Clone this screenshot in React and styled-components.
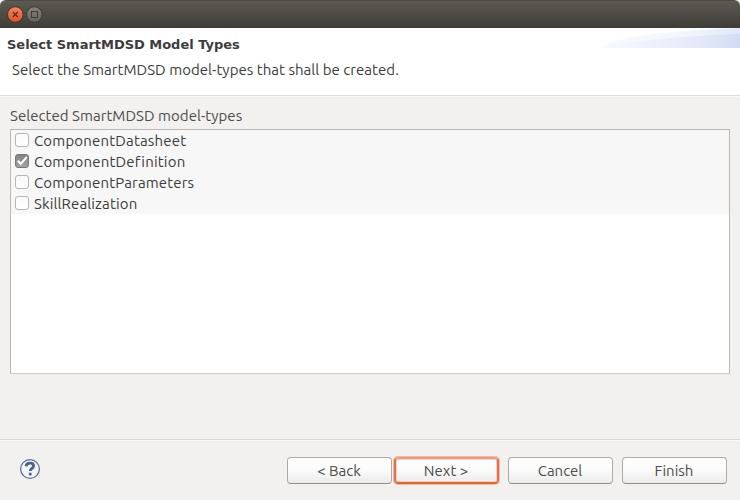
import React from "react";
import styled, { createGlobalStyle, css } from "styled-components";

const Global = createGlobalStyle`
  *, *::before, *::after { box-sizing: border-box; }
  html, body { margin: 0; background: #fff; }
  body { font: 15px/21px Ubuntu, "Noto Sans", sans-serif; color: #3c3c3c; overflow: hidden; }
`;

const Dialog = styled.main`
  width: 740px;
  height: 500px;
  display: flex;
  flex-direction: column;
  background: #f2f1f0;
`;

const TitleBar = styled.header`
  height: 28px;
  flex: none;
  display: flex;
  gap: 1px;
  padding: 5px 6px;
  border-radius: 6px 6px 0 0;
  border-top: 1px solid #4c4a44;
  background: linear-gradient(#5f5d53 0, #5a574e 2px, #3e3d38 100%);
`;

const WindowButton = styled.button`
  width: 18px;
  height: 18px;
  padding: 0;
  border: 0;
  background: none;
  line-height: 0;
`;

const Banner = styled.section`
  height: 68px;
  flex: none;
  display: flex;
  justify-content: space-between;
  background: #fff;
  border-bottom: 1px solid #dcdcdc;
`;

const BannerText = styled.div`
  padding: 6px 0 0 7px;
`;

const Heading = styled.h1`
  margin: 0;
  font: bold 13px/21px "DejaVu Sans", sans-serif;
  letter-spacing: ${(p) => p.$track}px;
  white-space: nowrap;
`;

const Text = styled.span`
  letter-spacing: ${(p) => p.$track || 0}px;
  white-space: nowrap;
`;

const Description = styled.p`
  margin: 4px 0 0 5px;
`;

const Content = styled.section`
  flex: 1;
  padding: 8px 10px 0;
  border-top: 1px solid #fafafa;
`;

const ListLabel = styled.div`
  height: 24px;
  color: #4c4c4c;
`;

const List = styled.ul`
  height: 245px;
  margin: 0;
  padding: 0;
  list-style: none;
  background: #fff;
  border: 1px solid #b9b6b3;
  border-bottom-color: #cfcdcb;
`;

const Row = styled.li`
  height: 21px;
  display: flex;
  align-items: center;
  gap: 5px;
  padding-left: 4px;
  background: #f7f7f7;
`;

const Box = styled.span`
  width: 14px;
  height: 14px;
  flex: none;
  margin-top: -2px;
  display: flex;
  border-radius: 3px;
  border: 1px solid ${(p) => (p.$checked ? "#777" : "#b7b6b5")};
  background: ${(p) => (p.$checked ? "linear-gradient(#858585, #a2a2a2)" : "linear-gradient(#fafafa, #fff)")};
`;

const Footer = styled.footer`
  height: 61px;
  flex: none;
  display: flex;
  align-items: flex-start;
  padding: 16px 13px 0 19px;
  border-top: 1px solid #dad9d8;
  box-shadow: inset 0 1px #fbfbfb;
`;

const Help = styled.button`
  width: 22px;
  height: 22px;
  margin: 2px auto 0 0;
  padding: 0;
  border: 0;
  background: none;
  line-height: 0;
`;

const Actions = styled.div`
  display: flex;
  gap: 9px;
  padding-top: 1px;
`;

const Pair = styled.div`
  display: flex;
  gap: 2px;
`;

const Button = styled.button`
  width: 105px;
  height: 27px;
  padding: 0 1px 0 0;
  font: inherit;
  line-height: 25px;
  color: #4c4c4c;
  border: 1px solid #adabaa;
  border-bottom-color: #8f8e8d;
  border-radius: 4px;
  background: linear-gradient(#fff, #fafafa 50%, #ececeb);
  ${(p) =>
    p.$primary &&
    css`
      line-height: 23px;
      border: 2px solid #dc744a;
      border-top-color: #eb9d80;
      border-bottom-color: #d36b40;
      box-shadow: 0 0 0 1px #efb9a5, inset 0 0 0 1px #f1d0c3;
    `}
`;

const items = [
  { name: "ComponentDatasheet", track: 0.17 },
  { name: "ComponentDefinition", track: 0.2, checked: true },
  { name: "ComponentParameters", track: 0.16 },
  { name: "SkillRealization", track: 0.13 },
];

function CloseIcon() {
  return (
    <svg width="18" height="18" viewBox="0 0 18 18">
      <defs>
        <linearGradient id="close" x2="0" y2="1">
          <stop stopColor="#f58463" />
          <stop offset="1" stopColor="#e35023" />
        </linearGradient>
      </defs>
      <circle cx="9.3" cy="8.5" r="7.8" fill="url(#close)" stroke="#3b3833" strokeWidth="1" />
      <path d="M6.8 6 11.8 11M11.8 6 6.8 11" stroke="#5a3427" strokeWidth="1.4" />
    </svg>
  );
}

function MaximizeIcon() {
  return (
    <svg width="18" height="18" viewBox="0 0 18 18">
      <defs>
        <linearGradient id="max" x2="0" y2="1">
          <stop stopColor="#85837c" />
          <stop offset="1" stopColor="#64625c" />
        </linearGradient>
      </defs>
      <circle cx="9.4" cy="8.5" r="7.8" fill="url(#max)" stroke="#3b3833" strokeWidth="1" />
      <rect x="6.5" y="5.5" width="6" height="6" fill="none" stroke="#3d3b37" />
    </svg>
  );
}

function Swoosh() {
  return (
    <svg width="141" height="20" viewBox="0 0 141 20">
      <defs>
        <linearGradient id="upper">
          <stop stopColor="#f8fafd" />
          <stop offset=".6" stopColor="#f3f6fc" />
          <stop offset="1" stopColor="#dfe8f9" />
        </linearGradient>
        <linearGradient id="lower">
          <stop stopColor="#f8faff" />
          <stop offset=".55" stopColor="#e9edf9" />
          <stop offset=".85" stopColor="#dce5f6" />
          <stop offset="1" stopColor="#cfdaf5" />
        </linearGradient>
      </defs>
      <path d="M1 20C12 9 72 2 141 0V20Z" fill="url(#upper)" />
      <path d="M1 20C35 12 85 8 141 6V20Z" fill="url(#lower)" />
    </svg>
  );
}

function HelpIcon() {
  return (
    <svg width="22" height="22" viewBox="0 0 22 22">
      <circle cx="11" cy="11" r="9.4" fill="#f3f4f6" stroke="#5b7093" strokeWidth="1.3" />
      <path d="M7 8.300C7.300 6 8.800 5.200 11 5.200c2.300 0 3.600 1 3.600 2.700 0 2.500-3.300 2.500-3.300 5" fill="none" stroke="#4a608a" strokeWidth="2.800" />
      <circle cx="11.200" cy="16" r="1.600" fill="#4a608a" />
    </svg>
  );
}

function Tick() {
  return (
    <svg width="12" height="12" viewBox="0 0 12 12">
      <path d="m1.800 5.800 3 3L10.800 2" fill="none" stroke="#fff" strokeWidth="2" />
    </svg>
  );
}

export default function App() {
  return (
    <>
      <Global />
      <Dialog>
        <TitleBar>
          <WindowButton aria-label="Close"><CloseIcon /></WindowButton>
          <WindowButton aria-label="Maximize"><MaximizeIcon /></WindowButton>
        </TitleBar>
        <Banner>
          <BannerText>
            <Heading $track={-0.02}>Select SmartMDSD Model Types</Heading>
            <Description>
              <Text $track={0.035}>Select the SmartMDSD model-types that shall be created.</Text>
            </Description>
          </BannerText>
          <Swoosh />
        </Banner>
        <Content>
          <ListLabel><Text $track={0.04}>Selected SmartMDSD model-types</Text></ListLabel>
          <List>
            {items.map((item) => (
              <Row key={item.name}>
                <Box role="checkbox" aria-checked={!!item.checked} $checked={item.checked}>
                  {item.checked && <Tick />}
                </Box>
                <Text $track={item.track}>{item.name}</Text>
              </Row>
            ))}
          </List>
        </Content>
        <Footer>
          <Help aria-label="Help"><HelpIcon /></Help>
          <Actions>
            <Pair>
              <Button><Text>&lt; Back</Text></Button>
              <Button $primary><Text>Next &gt;</Text></Button>
            </Pair>
            <Button><Text>Cancel</Text></Button>
            <Button><Text>Finish</Text></Button>
          </Actions>
        </Footer>
      </Dialog>
    </>
  );
}
